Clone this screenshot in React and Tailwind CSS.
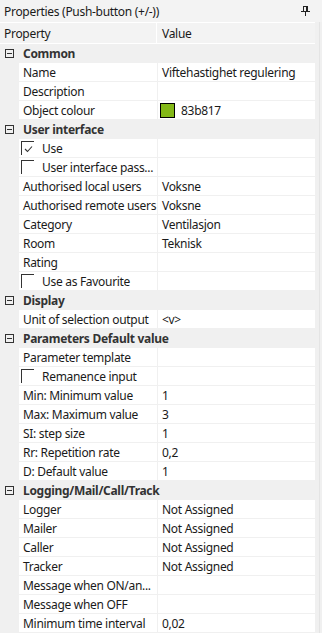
import React from "react";

const sections = [
  {
    title: "Common",
    rows: [
      { p: "Name", v: "Viftehastighet regulering" },
      { p: "Description", v: "" },
      { p: "Object colour", v: "83b817", swatch: "#83b817" },
    ],
  },
  {
    title: "User interface",
    rows: [
      { p: "Use", check: true, checked: true },
      { p: "User interface pass...", check: true },
      { p: "Authorised local users", v: "Voksne" },
      { p: "Authorised remote users", v: "Voksne" },
      { p: "Category", v: "Ventilasjon" },
      { p: "Room", v: "Teknisk" },
      { p: "Rating", v: "" },
      { p: "Use as Favourite", check: true },
    ],
  },
  {
    title: "Display",
    rows: [{ p: "Unit of selection output", v: "<v>" }],
  },
  {
    title: "Parameters Default value",
    rows: [
      { p: "Parameter template", v: "" },
      { p: "Remanence input", check: true },
      { p: "Min: Minimum value", v: "1" },
      { p: "Max: Maximum value", v: "3" },
      { p: "SI: step size", v: "1" },
      { p: "Rr: Repetition rate", v: "0,2" },
      { p: "D: Default value", v: "1" },
    ],
  },
  {
    title: "Logging/Mail/Call/Track",
    rows: [
      { p: "Logger", v: "Not Assigned" },
      { p: "Mailer", v: "Not Assigned" },
      { p: "Caller", v: "Not Assigned" },
      { p: "Tracker", v: "Not Assigned" },
      { p: "Message when ON/an...", v: "" },
      { p: "Message when OFF", v: "" },
      { p: "Minimum time interval", v: "0,02" },
    ],
  },
];

function Minus() {
  return (
    <div className="w-[9px] h-[9px] border border-[#333] flex items-center justify-center ml-[5px] mr-[9px] shrink-0">
      <div className="w-[5px] h-px bg-[#333]" />
    </div>
  );
}

function Check({ checked }) {
  return (
    <div className="w-[13px] h-[14px] border-l border-t border-[#333] mr-[8px] shrink-0 flex items-center justify-center">
      {checked && (
        <svg width="9" height="8" viewBox="0 0 9 8">
          <path d="M1 4 L3.5 6.5 L8 1.5" fill="none" stroke="#333" strokeWidth="1.1" />
        </svg>
      )}
    </div>
  );
}

export default function App() {
  return (
    <div
      className="w-[322px] h-[633px] bg-[#f0f0f0] text-[12px] tracking-[-0.3px] text-[#1a1a1a] overflow-hidden flex flex-col"
      style={{ fontFamily: '"Noto Sans", "Segoe UI", sans-serif' }}
    >
      <div className="h-[22px] flex items-center justify-between pl-[4px] pr-[12px] pt-[2px] shrink-0 bg-[#f3f3f3]">
        <span className="text-[#1a1a1a]">Properties (Push-button (+/-))</span>
        <svg width="9" height="10" viewBox="0 0 9 10" className="-mt-[2px]">
          <rect x="2.5" y="0.5" width="4" height="5" fill="none" stroke="#222" />
          <rect x="5" y="1" width="1" height="4" fill="#222" />
          <rect x="0" y="5" width="9" height="1" fill="#222" />
          <rect x="4" y="6" width="1" height="4" fill="#222" />
        </svg>
      </div>
      <div className="flex flex-1 min-h-0">
        <div className="w-[315px] flex flex-col">
          <div className="h-[22px] flex border-t border-b border-white shrink-0 bg-[#f3f3f3]">
            <div className="w-[157px] border-r border-white pl-[4px] pt-px flex items-center">Property</div>
            <div className="flex-1 pl-[5px] pt-px flex items-center">Value</div>
          </div>
          {sections.map((s) => (
            <React.Fragment key={s.title}>
              <div className="h-[19px] flex items-center shrink-0">
                <Minus />
                <span className="font-bold text-[#333] pt-px">{s.title}</span>
              </div>
              {s.rows.map((r) => (
                <div key={r.p} className="h-[19px] flex pl-[19px] shrink-0">
                  <div
                    className={
                      r.check
                        ? "w-[138px] h-[18px] bg-white flex items-center pl-[2px] mr-px whitespace-nowrap overflow-hidden"
                        : "w-[138px] h-[18px] bg-white flex items-center pl-[4px] mr-px whitespace-nowrap overflow-hidden"
                    }
                  >
                    {r.check ? (
                      <>
                        <Check checked={r.checked} />
                        <span className="pt-px">{r.p}</span>
                      </>
                    ) : (
                      <span className="pt-px">{r.p}</span>
                    )}
                  </div>
                  <div className="flex-1 h-[18px] bg-white flex items-center pl-[4px] whitespace-nowrap">
                    {r.swatch && (
                      <div className="w-[15px] h-[15px] border border-black mr-[6px] -ml-[2px]" style={{ background: r.swatch }} />
                    )}
                    <span className="pt-px">{r.v}</span>
                  </div>
                </div>
              ))}
            </React.Fragment>
          ))}
        </div>
        <div className="flex-1 flex">
          <div className="w-[4px] bg-[#f0f0f0]" />
          <div className="w-px bg-[#fafafa] border-l border-[#e4e4e4]" />
        </div>
      </div>
    </div>
  );
}
